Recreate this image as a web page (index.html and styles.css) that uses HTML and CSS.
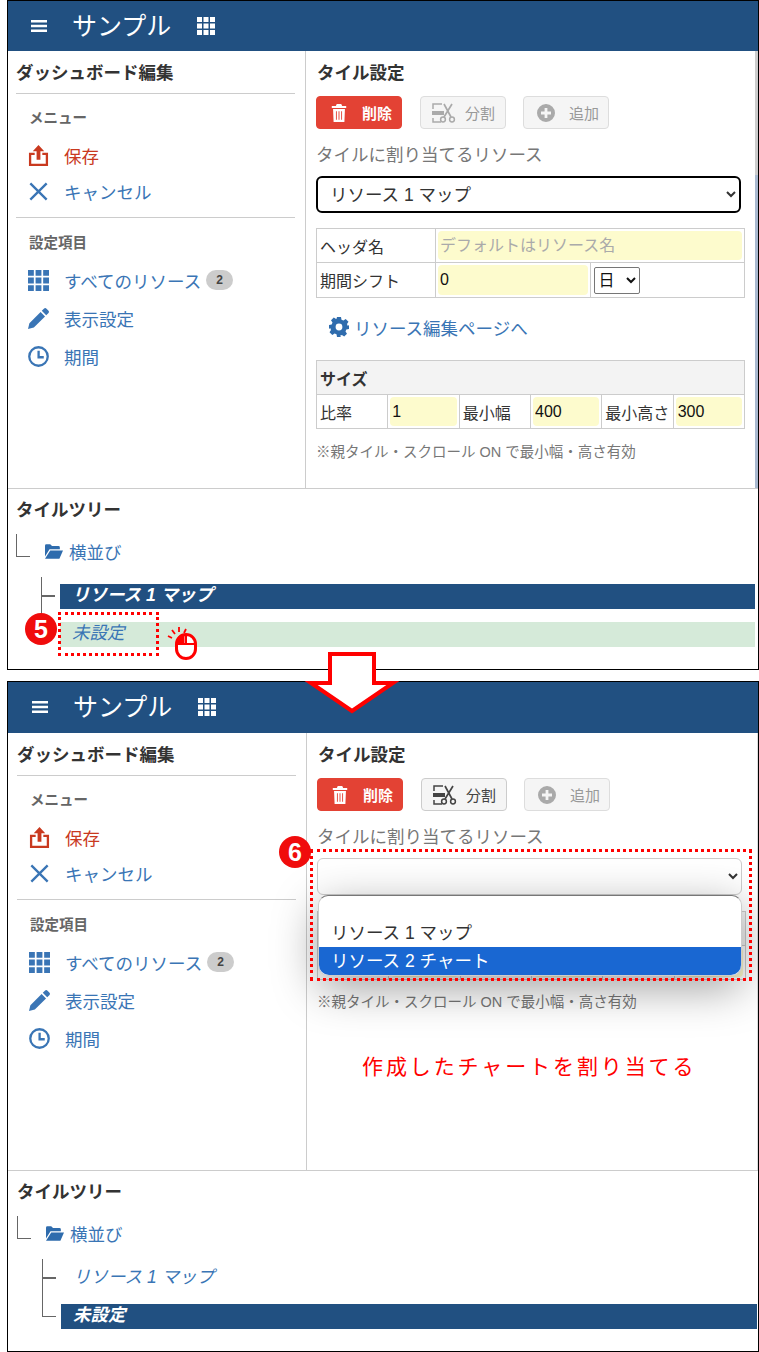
FILE: index.html
```html
<!DOCTYPE html>
<html lang="ja">
<head>
  <meta charset="UTF-8" />
  <meta name="viewport" content="width=device-width, initial-scale=1.0"/>
  <title>タイル設定</title>
  <link rel="stylesheet" href="styles.css">
</head>
<body>

  <svg class="sprites" aria-hidden="true">
    <symbol id="i-bars" viewBox="0 0 16 12"><path d="M0 0h16v2.6H0zM0 4.7h16v2.6H0zM0 9.4h16V12H0z"/></symbol>
    <symbol id="i-grid" viewBox="0 0 18 18"><path d="M0 0h5v5H0zM6.5 0h5v5h-5zM13 0h5v5h-5zM0 6.5h5v5H0zM6.5 6.5h5v5h-5zM13 6.5h5v5h-5zM0 13h5v5H0zM6.5 13h5v5h-5zM13 13h5v5h-5z"/></symbol>
    <symbol id="i-upload" viewBox="0 0 22 22"><path d="M11 0l6 6.5h-4v9H9v-9H5zM1 8h6v2.4H3.4v9.2h15.2v-9.2H15V8h6v14H1z"/></symbol>
    <symbol id="i-x" viewBox="0 0 18 18"><path d="M2 2l14 14M16 2L2 16" fill="none" stroke="currentColor" stroke-width="2"/></symbol>
    <symbol id="i-pencil" viewBox="0 0 18 18"><path d="M0 18l1.2-5L10.8 3.4l3.8 3.8L5 16.8zM11.8 2.4L13.6.6a1.6 1.6 0 012.3 0l1.5 1.5a1.6 1.6 0 010 2.3l-1.8 1.8z"/></symbol>
    <symbol id="i-clock" viewBox="0 0 20 20"><circle cx="10" cy="10" r="8.8" fill="none" stroke="currentColor" stroke-width="2.2"/><path d="M9 4.5h2.2V9.6h3.8v2.2H9z"/></symbol>
    <symbol id="i-trash" viewBox="0 0 16 20"><path d="M5.5 0h5l1 2.2H16v2.2H0V2.2h4.5zM1.4 5.6h13.2L14 20H2zM4.6 8v9.5h1V8zM7.5 8v9.5h1V8zM10.4 8v9.5h1V8z" fill-rule="evenodd"/></symbol>
    <symbol id="i-split" viewBox="0 0 24 20"><path d="M1 6V1h9M1 15v4h8" fill="none" stroke="currentColor" stroke-width="1.5"/><path d="M0 8h12v4H0z"/><path d="M12 1l7 13M20 1l-8 13" fill="none" stroke="currentColor" stroke-width="1.7"/><circle cx="11" cy="16.5" r="2.4" fill="none" stroke="currentColor" stroke-width="1.5"/><circle cx="20" cy="16.5" r="2.4" fill="none" stroke="currentColor" stroke-width="1.5"/></symbol>
    <symbol id="i-plus" viewBox="0 0 18 18"><path d="M9 0a9 9 0 110 18A9 9 0 019 0zM7.6 4v3.6H4v2.8h3.6V14h2.8v-3.6H14V7.6h-3.6V4z" fill-rule="evenodd"/></symbol>
    <symbol id="i-gear" viewBox="0 0 20 20"><path d="M8 0h4l.5 2.7 1.9.8L16.7 2l2.8 2.8-1.5 2.3.8 1.9L20 8v4l-2.7.5-.8 1.9 1.5 2.3-2.8 2.8-2.3-1.5-1.9.8L12 20H8l-.5-2.7-1.9-.8-2.3 1.5L.5 15.2 2 12.9l-.8-1.9L0 12V8l2.7-.5.8-1.9L2 3.300 4.800.5 7.100 2l.4-.2zM10 6.600a3.400 3.400 0 100 6.800 3.400 3.400 0 000-6.800z" fill-rule="evenodd"/></symbol>
    <symbol id="i-folder" viewBox="0 0 20 16"><path d="M0 1.500A1.500 1.500 0 011.500 0h4.300L7.800 2h7.200a1.500 1.500 0 011.500 1.500V5.500H5L0 13.500zM5.800 7H20l-4 9H0z"/></symbol>
    <symbol id="i-mouse" viewBox="0 0 30 34"><path d="M1 10l4 2M5 4l3 4M12 1v5M19 3l-2 4" fill="none" stroke="currentColor" stroke-width="1.800"/><rect x="9.500" y="8.500" width="19" height="24" rx="9.500" fill="#fff" stroke="currentColor" stroke-width="3"/><path d="M9.500 18V16a8 8 0 018-8V18z"/><path d="M9.500 18h19M19 8.500V18" fill="none" stroke="currentColor" stroke-width="2"/></symbol>
  </svg>

  <div class="page">

    <!-- 上の画面 -->
    <div class="frame frame-a">
      <header class="topbar">
        <svg class="ic-bars"><use href="#i-bars"/></svg>
        <span class="topbar-title">サンプル</span>
        <svg class="ic-apps"><use href="#i-grid"/></svg>
      </header>
      <div class="main">
        <aside class="side">
          <h2 class="pane-title">ダッシュボード編集</h2>
          <hr class="rule">
          <div class="side-label">メニュー</div>
          <a class="nav-item nav-short nav-save"><svg class="ic-nav"><use href="#i-upload"/></svg>保存</a>
          <a class="nav-item nav-short"><svg class="ic-nav"><use href="#i-x"/></svg>キャンセル</a>
          <hr class="rule rule-mid">
          <div class="side-label side-label-b">設定項目</div>
          <a class="nav-item"><svg class="ic-nav"><use href="#i-grid"/></svg>すべてのリソース<span class="count">2</span></a>
          <a class="nav-item"><svg class="ic-nav"><use href="#i-pencil"/></svg>表示設定</a>
          <a class="nav-item"><svg class="ic-nav"><use href="#i-clock"/></svg>期間</a>
        </aside>
        <section class="detail">
          <div class="scroll-thumb"></div>
          <h2 class="pane-title detail-title">タイル設定</h2>
          <div class="actions">
            <button class="btn btn-danger"><svg class="ic-btn"><use href="#i-trash"/></svg>削除</button>
            <button class="btn btn-off"><svg class="ic-split"><use href="#i-split"/></svg>分割</button>
            <button class="btn btn-off btn-add"><svg class="ic-btn"><use href="#i-plus"/></svg>追加</button>
          </div>
          <div class="field-label">タイルに割り当てるリソース</div>
          <select class="res-select res-focus">
            <option>リソース 1 マップ</option>
          </select>
          <table class="grid grid-head">
            <tr>
              <td class="cell-name">ヘッダ名</td>
              <td colspan="2" class="cell-input"><input placeholder="デフォルトはリソース名"></td>
            </tr>
            <tr>
              <td class="cell-name">期間シフト</td>
              <td class="cell-input"><input value="0"></td>
              <td class="cell-unit"><select class="unit-select"><option>日</option></select></td>
            </tr>
          </table>
          <a class="edit-link"><svg class="ic-gear"><use href="#i-gear"/></svg>リソース編集ページへ</a>
          <table class="grid grid-size">
            <tr><th colspan="6">サイズ</th></tr>
            <tr>
              <td class="c-a">比率</td><td class="cell-input c-b"><input value="1"></td>
              <td class="c-c">最小幅</td><td class="cell-input c-d"><input value="400"></td>
              <td class="c-e">最小高さ</td><td class="cell-input"><input value="300"></td>
            </tr>
          </table>
          <p class="note">※親タイル・スクロール ON で最小幅・高さ有効</p>
        </section>
      </div>
      <section class="tree">
        <h2 class="pane-title">タイルツリー</h2>
        <div class="tree-root">
          <span class="elbow"></span>
          <svg class="ic-folder"><use href="#i-folder"/></svg>横並び
        </div>
        <div class="branch">
          <div class="leaf"><span class="conn"></span><span class="leaf-bar leaf-on">リソース 1 マップ</span></div>
          <div class="leaf"><span class="conn conn-end"></span><span class="leaf-bar leaf-hover">未設定</span></div>
        </div>
      </section>

      <div class="dots dots-a"></div>
      <div class="step step-a">5</div>
      <svg class="ic-mouse"><use href="#i-mouse"/></svg>
    </div>

    <svg class="down-arrow" viewBox="0 0 96 64"><path d="M26 4h44v29h19L48 61 7 33h19z" fill="#fff" stroke="#f00" stroke-width="4"/></svg>

    <!-- 下の画面 -->
    <div class="frame frame-b">
      <header class="topbar">
        <svg class="ic-bars"><use href="#i-bars"/></svg>
        <span class="topbar-title">サンプル</span>
        <svg class="ic-apps"><use href="#i-grid"/></svg>
      </header>
      <div class="main">
        <aside class="side">
          <h2 class="pane-title">ダッシュボード編集</h2>
          <hr class="rule">
          <div class="side-label">メニュー</div>
          <a class="nav-item nav-short nav-save"><svg class="ic-nav"><use href="#i-upload"/></svg>保存</a>
          <a class="nav-item nav-short"><svg class="ic-nav"><use href="#i-x"/></svg>キャンセル</a>
          <hr class="rule rule-mid">
          <div class="side-label side-label-b">設定項目</div>
          <a class="nav-item"><svg class="ic-nav"><use href="#i-grid"/></svg>すべてのリソース<span class="count">2</span></a>
          <a class="nav-item"><svg class="ic-nav"><use href="#i-pencil"/></svg>表示設定</a>
          <a class="nav-item"><svg class="ic-nav"><use href="#i-clock"/></svg>期間</a>
        </aside>
        <section class="detail">
          <h2 class="pane-title detail-title">タイル設定</h2>
          <div class="actions">
            <button class="btn btn-danger"><svg class="ic-btn"><use href="#i-trash"/></svg>削除</button>
            <button class="btn btn-on"><svg class="ic-split"><use href="#i-split"/></svg>分割</button>
            <button class="btn btn-off btn-add"><svg class="ic-btn"><use href="#i-plus"/></svg>追加</button>
          </div>
          <div class="field-label">タイルに割り当てるリソース</div>
          <select class="res-select"><option></option></select>
          <table class="grid grid-size grid-size-b">
            <tr><th colspan="6">サイズ</th></tr>
            <tr>
              <td class="c-a">比率</td><td class="cell-input c-b"><input value="1"></td>
              <td class="c-c">最小幅</td><td class="cell-input c-d"><input value="400"></td>
              <td class="c-e">最小高さ</td><td class="cell-input"><input value="300"></td>
            </tr>
          </table>
          <p class="note note-b">※親タイル・スクロール ON で最小幅・高さ有効</p>
        </section>
      </div>
      <section class="tree">
        <h2 class="pane-title">タイルツリー</h2>
        <div class="tree-root">
          <span class="elbow"></span>
          <svg class="ic-folder"><use href="#i-folder"/></svg>横並び
        </div>
        <div class="branch">
          <div class="leaf"><span class="conn"></span><span class="leaf-bar">リソース 1 マップ</span></div>
          <div class="leaf"><span class="conn conn-end"></span><span class="leaf-bar leaf-on">未設定</span></div>
        </div>
      </section>

      <div class="res-list">
        <div class="res-option"></div>
        <div class="res-option">リソース 1 マップ</div>
        <div class="res-option res-picked">リソース 2 チャート</div>
      </div>
      <div class="dots dots-b"></div>
      <div class="step step-b">6</div>
      <div class="caption">作成したチャートを割り当てる</div>
    </div>

  </div>

</body>
</html>
```

FILE: styles.css
```css
* {
  box-sizing: border-box;
}

body {
  margin: 0;
  background: #fff;
  color: #333;
  font-family: "Liberation Sans", "Noto Sans CJK JP", sans-serif;
  font-size: 17.5px;
}

.sprites {
  display: none;
}

.page {
  position: relative;
  padding-left: 7px;
}

.frame {
  position: relative;
  width: 752px;
  border: 1px solid #000;
  background: #fff;
  overflow: hidden;
}

.frame-a {
  height: 670px;
  margin-bottom: 11px;
}

.frame-b {
  height: 671px;
}

/* header */
.topbar {
  display: flex;
  align-items: center;
  height: 50px;
  padding-left: 23px;
  background: #215081;
  color: #fff;
  fill: #fff;
}

.frame-b .topbar {
  height: 51px;
  padding-left: 24px;
  padding-bottom: 1px;
}

.ic-bars {
  width: 16px;
  height: 12px;
}

.topbar-title {
  margin-left: 25px;
  font-size: 25px;
  line-height: 32px;
}

.ic-apps {
  width: 18px;
  height: 18px;
  margin-left: 26px;
}

.main {
  display: flex;
  height: 438px;
  border-bottom: 1px solid #ccc;
}

/* left column */
.side {
  width: 298px;
  padding: 0 10px 0 8px;
  border-right: 1px solid #ccc;
}

.frame-b .side {
  width: 299px;
  padding-left: 9px;
}

.pane-title {
  margin: 0;
  padding-top: 10px;
  font-size: 17.5px;
  line-height: 24px;
  font-weight: bold;
}

.rule {
  height: 1px;
  margin: 8px 0 0;
  border: none;
  background: #ccc;
}

.rule-mid {
  margin-top: 8px;
}

.side-label {
  margin-top: 14px;
  padding-left: 13px;
  font-size: 14.5px;
  line-height: 20px;
  font-weight: bold;
  color: #666;
}

.side-label-b {
  margin-top: 15px;
  margin-bottom: 8px;
}

.nav-item {
  display: flex;
  align-items: center;
  height: 38px;
  padding-left: 12px;
  color: #3a75b5;
  fill: #3a75b5;
}

.nav-short {
  height: 36px;
}

.side-label + .nav-short {
  margin-top: 9px;
}

.nav-save {
  color: #c9391f;
  fill: #c9391f;
}

.ic-nav {
  width: 21px;
  height: 21px;
  margin-right: 15px;
}

.count {
  width: 27px;
  height: 20px;
  margin-left: 5px;
  border-radius: 10px;
  background: #ccc;
  color: #444;
  font-size: 12px;
  font-weight: bold;
  line-height: 20px;
  text-align: center;
}

/* right column */
.detail {
  position: relative;
  flex: 1;
  padding-left: 10px;
  border-right: 3px solid #ccc;
}

.frame-b .detail {
  border-right: 1px solid #ddd;
}

.scroll-thumb {
  position: absolute;
  top: 124px;
  right: -3px;
  bottom: 0;
  width: 3px;
  background: #a9b9d0;
}

.detail-title {
  padding-left: 1px;
}

.actions {
  display: flex;
  gap: 18px;
  margin-top: 11px;
}

.btn {
  display: flex;
  align-items: center;
  width: 86px;
  height: 33px;
  padding: 0 0 0 13px;
  border: 1px solid #ddd;
  border-radius: 4px;
  font-family: inherit;
  font-size: 15px;
}

.btn-add {
  margin-left: -1px;
}

.btn-danger {
  border-color: #e34234;
  background: #e34234;
  color: #fff;
  fill: #fff;
  font-weight: bold;
}

.btn-off {
  background: #f5f5f5;
  color: #999;
  fill: #aaa;
}

.btn-on {
  border-color: #ccc;
  background: #f5f5f5;
  color: #444;
  fill: #444;
}

.btn-off .ic-split {
  color: #aaa;
}

.btn-on .ic-split {
  color: #444;
}

.ic-btn {
  width: 18px;
  height: 18px;
  margin-right: 14px;
}

.btn-off .ic-split,
.btn-on .ic-split {
  width: 24px;
  height: 20px;
  margin: 0 9px 0 -2px;
}

.field-label {
  margin-top: 14px;
  line-height: 24px;
  color: #777;
}

.res-select {
  display: block;
  width: 425px;
  height: 37px;
  margin-top: 9px;
  padding-left: 8px;
  border: 1px solid #ccc;
  border-radius: 6px;
  background: #fff;
  color: #333;
  font-family: inherit;
  font-size: 17.5px;
}

.res-focus {
  border: 2px solid #000;
}

.grid {
  width: 429px;
  table-layout: fixed;
  border-collapse: collapse;
  font-size: 16px;
}

.grid td,
.grid th {
  padding: 0 3px;
  border: 1px solid #ccc;
  text-align: left;
}

.grid input {
  display: block;
  width: 100%;
  height: 100%;
  padding: 0 2px;
  border: none;
  border-radius: 4px;
  background: #fdfbcd;
  color: #111;
  font-family: inherit;
  font-size: 16px;
}

.grid input::placeholder {
  color: #aaa;
}

.grid-head {
  margin-top: 15px;
}

.grid-head tr:first-child {
  height: 33px;
}

.grid-head tr:last-child {
  height: 35px;
}

.grid-head .cell-name {
  width: 119px;
}

.grid .cell-input {
  height: 34px;
  padding: 2px;
}

.grid .cell-unit {
  width: 65px;
  padding: 0 3px;
}

.unit-select {
  display: block;
  width: 46px;
  height: 27px;
  border: 1px solid #767676;
  border-radius: 2px;
  background: #fff;
  color: #111;
  font-family: inherit;
  font-size: 16px;
}

.edit-link {
  display: flex;
  align-items: center;
  height: 32px;
  margin-top: 13px;
  padding-left: 13px;
  color: #3a75b5;
  fill: #2f6cad;
}

.ic-gear {
  width: 20px;
  height: 20px;
  margin-right: 5px;
}

.grid-size {
  margin-top: 17px;
}

.grid-size-b {
  margin-top: 16px;
  margin-left: 0;
}

.grid-size tr {
  height: 34px;
}

.grid-size th {
  background: #f3f3f3;
  font-size: 16px;
}

.grid .c-a { width: 81px; }
.grid .c-b { width: 62px; }
.grid .c-c { width: 81px; }
.grid .c-d { width: 61px; }
.grid .c-e { width: 82px; }

.note {
  margin: 13px 0 0;
  font-size: 14.5px;
  line-height: 20px;
  color: #777;
}

.note-b {
  margin-top: 12px;
}

/* tree */
.tree {
  padding: 0 3px 0 8px;
}

.frame-b .tree {
  padding: 0 1px 0 9px;
}

.tree .pane-title {
  padding-top: 9px;
}

.tree-root {
  display: flex;
  align-items: center;
  height: 34px;
  margin-top: 12px;
  color: #3a75b5;
  fill: #2f6cad;
}

.elbow {
  align-self: flex-start;
  width: 14px;
  height: 23px;
  border-left: 1px solid #666;
  border-bottom: 1px solid #666;
}

.ic-folder {
  width: 18px;
  height: 15px;
  margin: 0 6px 0 15px;
}

.branch {
  margin: 9px 0 0 25px;
}

.leaf {
  display: flex;
  align-items: center;
  height: 38px;
}

.conn {
  align-self: stretch;
  width: 14px;
  margin-right: 5px;
  border-left: 1px solid #666;
  background: linear-gradient(#666, #666) 0 50% / 100% 2px no-repeat;
}

.conn-end {
  align-self: flex-start;
  height: 20px;
  border-bottom: 1px solid #666;
  background: none;
}

.leaf-bar {
  flex: 1;
  height: 25px;
  padding-left: 12px;
  color: #3a75b5;
  font-style: italic;
  line-height: 23px;
}

.leaf-on {
  background: #215081;
  color: #fff;
  font-weight: bold;
}

.leaf-hover {
  background: #d5ead9;
}

/* dropdown opened over the form */
.res-list {
  position: absolute;
  left: 310px;
  top: 213px;
  width: 424px;
  height: 81px;
  overflow: hidden;
  border: 1px solid #ccc;
  border-top-color: #777;
  border-radius: 10px;
  background: #fff;
  box-shadow: 0 12px 45px rgba(0, 0, 0, 0.38);
}

.res-list {
  overflow: visible;
}

.res-option {
  height: 23px;
  padding-left: 12px;
  line-height: 28px;
  color: #333;
}

.res-option + .res-option {
  height: 28px;
}

.res-picked {
  border-radius: 0 0 10px 10px;
  background: #1967d2;
  color: #fff;
}

/* annotations */
.dots {
  position: absolute;
  border: 3px dotted #f00;
}

.dots-a {
  left: 50px;
  top: 611px;
  width: 101px;
  height: 44px;
}

.dots-b {
  left: 302px;
  top: 167px;
  width: 442px;
  height: 132px;
}

.step {
  position: absolute;
  width: 32px;
  height: 32px;
  border-radius: 50%;
  background: #f00c0c;
  color: #fff;
  font-size: 25px;
  font-weight: bold;
  line-height: 32px;
  text-align: center;
}

.step-a {
  left: 17px;
  top: 612px;
}

.step-b {
  left: 271px;
  top: 154px;
}

.ic-mouse {
  position: absolute;
  left: 159px;
  top: 625px;
  width: 30px;
  height: 34px;
  color: #f00;
  fill: #f00;
}

.caption {
  position: absolute;
  left: 354px;
  top: 371px;
  color: #f00;
  font-size: 21px;
  letter-spacing: 2.9px;
  line-height: 28px;
  white-space: nowrap;
}

.down-arrow {
  position: absolute;
  left: 304px;
  top: 650px;
  width: 96px;
  height: 64px;
  z-index: 2;
}
```
